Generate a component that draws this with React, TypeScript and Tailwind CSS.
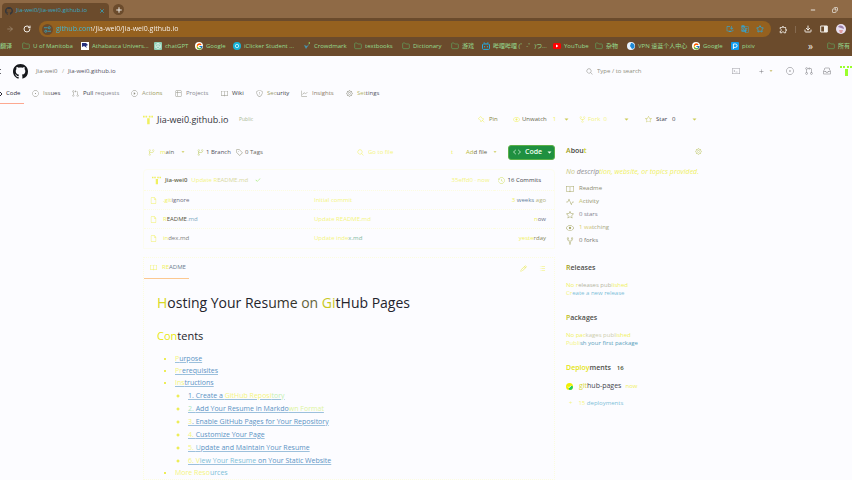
import type { ReactNode } from "react";
import {
  GoBook, GoCheck, GoCode, GoEye, GoFile, GoGear, GoGitBranch, GoGitPullRequest, GoGraph, GoHistory, GoInbox,
  GoIssueOpened, GoListUnordered, GoPencil, GoPin, GoPlay, GoPlus, GoPulse, GoRepoForked, GoSearch,
  GoShield, GoStar, GoTable, GoTag, GoTerminal, GoTriangleDown,
} from "react-icons/go";
import { FcGoogle } from "react-icons/fc";
import { MdGTranslate, MdOutlineInstallDesktop, MdOutlineExtension } from "react-icons/md";
import { ArrowRight, Copy, Download, Folder, Minus, Plus, RotateCw, Star, X } from "lucide-react";

type Part = [text: string, color: string];

const pale = "text-[#f0f060]";
const faint = "text-[#f4f480]";
const ink = "text-[#3c3c48]";
const gray = "text-[#85858d]";
const blue = "text-[#5b93c4]";
const sky = "text-[#7cc0d8]";

function Tint({ parts }: { parts: Part[] }) {
  return (
    <>
      {parts.map(([text, color], i) => (
        <span key={i} className={color}>{text}</span>
      ))}
    </>
  );
}

function GithubMark({ className }: { className: string }) {
  return (
    <svg viewBox="0 0 16 16" className={className} fill="currentColor" aria-hidden="true">
      <path d="M8 0C3.58 0 0 3.58 0 8c0 3.54 2.29 6.53 5.47 7.59.4.07.55-.17.55-.38 0-.19-.01-.82-.01-1.49-2.01.37-2.53-.49-2.69-.94-.09-.23-.48-.94-.82-1.13-.28-.15-.68-.52-.01-.53.63-.01 1.08.58 1.23.82.72 1.21 1.87.87 2.33.66.07-.52.28-.87.51-1.07-1.78-.2-3.64-.89-3.64-3.95 0-.87.31-1.59.82-2.15-.08-.2-.36-1.02.08-2.12 0 0 .67-.21 2.2.82.64-.18 1.32-.27 2-.27s1.36.09 2 .27c1.53-1.04 2.2-.82 2.2-.82.44 1.1.16 1.92.08 2.12.51.56.82 1.27.82 2.15 0 3.07-1.87 3.75-3.65 3.95.29.25.54.73.54 1.48 0 1.07-.01 1.93-.01 2.2 0 .21.15.46.55.38A8.01 8.01 0 0 0 16 8c0-4.42-3.58-8-8-8z" />
    </svg>
  );
}

function PixelAvatar({ className }: { className: string }) {
  return (
    <svg viewBox="0 0 12 12" className={className} fill="currentColor" aria-hidden="true">
      <path d="M0 1h2v2H0zM3 1h2v2H3zM7 1h2v2H7zM10 1h2v2h-2zM5 4h3v3H5zM5 7h3v4H5z" />
    </svg>
  );
}

const folder = <Folder className="size-2 text-[#62a862]" />;
const google = (
  <span className="flex size-2 items-center justify-center rounded-full bg-white">
    <FcGoogle className="size-[7px]" />
  </span>
);

const bookmarks: { label: string; width: string; icon: ReactNode }[] = [
  { label: "U of Manitoba", width: "w-[59px]", icon: folder },
  {
    label: "Athabasca Univers...", width: "w-[73px]",
    icon: <svg viewBox="0 0 8 8" className="size-2"><path fill="#fff" d="M0 0h8v8H0z" /><path fill="#27307c" d="M1 1h4l2 2-2 1 1 2-3-2-2 1z" /></svg>,
  },
  {
    label: "chatGPT", width: "w-[41px]",
    icon: <svg viewBox="0 0 8 8" className="size-2"><rect width="8" height="8" rx="1" fill="#8fceb4" /><path d="M4 1.3 6.3 2.6v2.8L4 6.7 1.7 5.4V2.6zM4 1.3v2.7l2.3 1.4M4 4 1.7 5.4" fill="none" stroke="#fff" strokeWidth=".6" /></svg>,
  },
  { label: "Google", width: "w-[38px]", icon: google },
  {
    label: "iClicker Student ...", width: "w-[70px]",
    icon: <svg viewBox="0 0 8 8" className="size-2"><circle cx="4" cy="4" r="4" fill="#16b4d8" /><circle cx="4" cy="4" r="1.7" fill="none" stroke="#d8f6ff" strokeWidth=".8" /></svg>,
  },
  {
    label: "Crowdmark", width: "w-[51px]",
    icon: <svg viewBox="0 0 8 8" className="size-2"><path d="m1 3 2 4 4-6-3 3z" fill="#4a93a8" /><path d="m5 1 2-1v2z" fill="#8ad05c" /></svg>,
  },
  { label: "textbooks", width: "w-[48px]", icon: folder },
  { label: "Dictionary", width: "w-[49px]", icon: folder },
  { label: "游戏", width: "w-[31px]", icon: folder },
  {
    label: "哔哩哔哩 (゜-゜)つ...", width: "w-[71px]",
    icon: <svg viewBox="0 0 8 8" className="size-2" fill="none" stroke="#27a9dd" strokeWidth="1"><rect x=".5" y="2" width="7" height="5.4" rx="1" /><path d="m2 .3 1 1.5M6 .3 5 1.8M2.6 4v1.4M5.4 4v1.4" /></svg>,
  },
  {
    label: "YouTube", width: "w-[42px]",
    icon: <svg viewBox="0 0 8 8" className="size-2"><rect y="1" width="8" height="6" rx="1.5" fill="#f00" /><path d="M3 2.6v2.8L5.4 4z" fill="#fff" /></svg>,
  },
  { label: "杂物", width: "w-[32px]", icon: folder },
  {
    label: "VPN 速蓝个人中心", width: "w-[65px]",
    icon: <svg viewBox="0 0 8 8" className="size-2"><circle cx="4" cy="4" r="4" fill="#e9f4ff" /><path d="M4 1a3 3 0 0 1 1 6L3 4z" fill="#1c8ad6" /></svg>,
  },
  { label: "Google", width: "w-[39px]", icon: google },
  {
    label: "pixiv", width: "w-[40px]",
    icon: <svg viewBox="0 0 8 8" className="size-2"><rect width="8" height="8" rx="1" fill="#0f9cf0" /><path d="M2.4 7V2h2a1.7 1.7 0 0 1 0 3.4h-2" fill="none" stroke="#fff" strokeWidth=".9" /></svg>,
  },
];

function Browser() {
  return (
    <header className="h-14 overflow-hidden bg-[#6b4b2c]">
      <div className="flex h-[18px] items-end bg-[#8f6a46] pl-0.5">
        <div className="flex h-[15px] w-[107px] items-center rounded-t bg-[#6b4b2c] pr-1 pl-[3px] text-[6px] text-[#35a6c0]">
          <GithubMark className="size-2 text-[#33363c]" />
          <span className="ml-[3px] flex-1 whitespace-nowrap">Jia-wei0/Jia-wei0.github.io</span>
          <button type="button" aria-label="Close tab"><X className="size-[6px]" strokeWidth={3} /></button>
        </div>
        <button type="button" aria-label="New tab" className="mb-[3px] ml-1 flex size-[11px] items-center justify-center rounded-full bg-[#6b4b2c] text-[#f0ece6]">
          <Plus className="size-2" strokeWidth={3} />
        </button>
        <div className="mb-[5px] ml-auto flex gap-4 pr-3.5 text-[#e6e0d8]">
          <button type="button" aria-label="Minimize"><Minus className="size-[6px]" strokeWidth={4} /></button>
          <button type="button" aria-label="Restore"><Copy className="size-[6px] -scale-x-100" strokeWidth={3} /></button>
        </div>
      </div>
      <div className="flex h-[22px] items-center pr-1.5 pl-1.5">
        <button type="button" aria-label="Forward" className="text-[#a9957c]"><ArrowRight className="size-2" /></button>
        <button type="button" aria-label="Reload" className="ml-[9px] text-[#f2ede6]"><RotateCw className="size-2" strokeWidth={3} /></button>
        <div className="ml-2 flex h-4 flex-1 items-center rounded-full bg-[#95611f] pr-[7px] pl-[3px]">
          <span className="flex size-[11px] items-center justify-center rounded-full bg-[#6b4b2c]">
            <svg viewBox="0 0 8 8" className="size-[7px]" fill="none" stroke="#39a0bb"><path d="M0 2h4M4 6h4" /><circle cx="6" cy="2" r="1.2" /><circle cx="2" cy="6" r="1.2" /></svg>
          </span>
          <input
            aria-label="Address"
            defaultValue="github.com/Jia-wei0/Jia-wei0.github.io"
            className="ml-[3px] min-w-0 flex-1 bg-[linear-gradient(90deg,#3cbce0_35px,#ffffff_35px)] bg-clip-text text-[7px] text-transparent outline-none"
          />
          <span className="flex gap-[7px] text-[#3c9fc4]">
            <MdOutlineInstallDesktop className="size-2" />
            <MdGTranslate className="size-2" />
            <Star className="size-2" strokeWidth={3} />
          </span>
        </div>
        <div className="ml-2 flex items-center text-[#f2ede6]">
          <MdOutlineExtension className="size-[9px]" />
          <span className="ml-[7px] h-[7px] w-px bg-[#856a50]" />
          <Download className="ml-2 size-2" strokeWidth={3} />
          <svg viewBox="0 0 8 8" className="ml-2 size-2"><path d="M.7 1h6.6v6H.7zM4.5 1v6" fill="none" stroke="currentColor" /><path d="M4.5 1h2.8v6H4.5z" fill="currentColor" /></svg>
          <svg viewBox="0 0 10 10" className="ml-2 size-[10px]"><circle cx="5" cy="5" r="5" fill="#e8dff0" /><path d="M2 3c2-3 6-1 6 2L5 4z" fill="#9b7fa8" /><path d="M3 6h4l-1 3H4z" fill="#dd9ba0" /></svg>
        </div>
      </div>
      <nav aria-label="Bookmarks" className="flex h-3 items-center overflow-hidden text-[6px] whitespace-nowrap text-[#96dc90]">
        <a href="#" className="w-[22px] shrink-0">翻译</a>
        {bookmarks.map((b, i) => (
          <a key={i} href="#" className={`flex shrink-0 items-center gap-[3px] ${b.width}`}>
            <span className="shrink-0">{b.icon}</span>
            {b.label}
          </a>
        ))}
        <span className="ml-auto text-[10px] leading-3 text-[#f0ece6]">»</span>
        <a href="#" className="ml-[14px] flex w-[25px] shrink-0 items-center gap-[3px]"><span className="shrink-0">{folder}</span>所有</a>
      </nav>
    </header>
  );
}

const tabs: { label: Part[]; width: string; icon: ReactNode }[] = [
  { label: [["Iss", "text-[#8c8c70]"], ["ues", ink]], width: "w-10", icon: <GoIssueOpened /> },
  { label: [["Pull", ink], [" requests", gray]], width: "w-[59px]", icon: <GoGitPullRequest /> },
  { label: [["Act", "text-[#a0a080]"], ["ions", "text-[#9a9a54]"]], width: "w-11", icon: <GoPlay /> },
  { label: [["Projects", gray]], width: "w-[46px]", icon: <GoTable /> },
  { label: [["Wiki", ink]], width: "w-[35px]", icon: <GoBook /> },
  { label: [["Sec", "text-[#9c9c70]"], ["urity", ink]], width: "w-[45px]", icon: <GoShield /> },
  { label: [["Insights", "text-[#8c7c68]"]], width: "w-[45px]", icon: <GoGraph /> },
  { label: [["Set", "text-[#b4b46c]"], ["tings", "text-[#555564]"]], width: "w-10", icon: <GoGear /> },
];

function SiteHeader() {
  return (
    <div className="h-12">
      <div className="flex h-[30px] items-center text-[6px]">
        <span className="h-[5px] w-px border-y border-[#66666e]" />
        <GithubMark className="ml-3 size-[15px] text-[#16181c]" />
        <a href="#" className="ml-2 w-[26px] text-[#77776c]">Jia-wei0</a>
        <span className="w-[6px] text-[#b0b0a0]">/</span>
        <a href="#" className="text-[#50505c]">Jia-wei0.github.io</a>
        <label className="ml-auto flex w-[146px] items-center gap-1 text-[#8a8a84]">
          <GoSearch className="size-[7px]" />
          <input aria-label="Search" placeholder="Type / to search" className="w-[90px] text-[6px] outline-none placeholder:text-[#8f8f80]" />
        </label>
        <div className="flex items-center text-[#77777c]">
          <button type="button" aria-label="Command palette" className="w-[26px]"><GoTerminal className="size-2 text-[#9c9ca4]" /></button>
          <button type="button" aria-label="Create new" className="flex w-7 items-center gap-[3px]"><GoPlus className="size-[7px]" /><GoTriangleDown className="size-[6px] text-[#c4b860]" /></button>
          <a href="#" aria-label="Issues" className="w-[19px]"><GoIssueOpened className="size-2" /></a>
          <a href="#" aria-label="Pull requests" className="w-[18px]"><GoGitPullRequest className="size-2" /></a>
          <a href="#" aria-label="Notifications" className="w-[17px]"><GoInbox className="size-2" /></a>
          <PixelAvatar className="size-3 text-[#9aff2c]" />
        </div>
      </div>
      <nav aria-label="Repository" className="flex h-[18px] text-[6px]">
        <a href="#" className="flex w-6 items-center gap-1 border-b border-[#fda890] pb-[2px] text-[#2c2c38]">
          <svg viewBox="0 0 2 6" className="h-[6px] w-[2px]" fill="none" stroke="currentColor"><path d="m0 1 2 2-2 2" /></svg>
          Code
        </a>
        <span className="w-2" />
        {tabs.map((t, i) => (
          <a key={i} href="#" className={`flex items-center gap-1 pb-[3px] whitespace-nowrap text-[#8e8e80] [&>svg]:size-[7px] ${t.width}`}>
            {t.icon}
            <span><Tint parts={t.label} /></span>
          </a>
        ))}
      </nav>
    </div>
  );
}

const caret = <GoTriangleDown className="size-[6px] text-[#cccc58]" />;

function TitleRow() {
  return (
    <div className="flex h-[31px] items-center text-[6px] whitespace-nowrap">
      <PixelAvatar className={`size-[10px] ${pale}`} />
      <h1 className="ml-1 w-[82px] text-[9px] text-[#34343c]">Jia-wei0.github.io</h1>
      <span className="text-[5px] text-[#a8b890]">Public</span>
      <div className="ml-auto flex items-center text-[#3c3c48] [&_svg]:size-[7px]">
        <button type="button" className="flex w-[35px] items-center gap-1"><GoPin className={pale} /><span className="text-[#84843c]">Pin</span></button>
        <button type="button" className="flex w-[66px] items-center gap-[2px]"><GoEye className={pale} /><Tint parts={[["Unwatch", "text-[#66664c]"]]} /><span className={`ml-1 ${pale}`}>1</span><span className="ml-[5px]">{caret}</span></button>
        <button type="button" className="flex w-[66px] items-center gap-[2px]"><GoRepoForked className={pale} /><span className={`w-[33px] text-left ${faint}`}>Fork&nbsp; 0</span>{caret}</button>
        <button type="button" className="flex w-[57px] items-center gap-1"><GoStar className="text-[#c4c45c]" /><span>Star&nbsp;&nbsp; 0</span><span className="ml-3">{caret}</span></button>
      </div>
    </div>
  );
}

const files: { name: Part[]; message: Part[]; date: Part[] }[] = [
  { name: [[".git", pale], ["ignore", "text-[#6c6c80]"]], message: [["Initial commit", faint]], date: [["3 ", pale], ["weeks", "text-[#66809c]"], [" ago", "text-[#b4b480]"]] },
  { name: [["R", pale], ["EADME", "text-[#55553c]"], [".md", "text-[#7ca8c0]"]], message: [["Update README.md", faint]], date: [["n", pale], ["ow", "text-[#6c7088]"]] },
  { name: [["in", pale], ["dex.md", "text-[#80807c]"]], message: [["Update inde", faint], ["x.md", "text-[#80b8a0]"]], date: [["yeste", pale], ["rday", "text-[#88885c]"]] },
];

function Files() {
  return (
    <div className="flex-1 text-[6px] whitespace-nowrap">
      <div className="flex h-[34px] items-center">
        <button type="button" className="ml-[5px] flex w-[49px] items-center"><GoGitBranch className="size-[7px] text-[#d4dc60]" /><span className="ml-[5px] w-5 text-left text-[#66665c]"><span className={pale}>m</span>ain</span>{caret}</button>
        <a href="#" className="flex w-[39px] items-center gap-[2px] text-[#50505c]"><GoGitBranch className="size-[7px] text-[#b4c458]" />1 Branch</a>
        <a href="#" className="flex items-center gap-[2px] text-[#66665c]"><GoTag className="size-[7px] text-[#8c8c70]" />0 Tags</a>
        <label className={`ml-auto flex w-[109px] items-center gap-1 ${pale}`}>
          <GoSearch className="size-[7px]" />
          <input aria-label="Go to file" placeholder="Go to file" className="w-[79px] text-[6px] outline-none placeholder:text-[#f4f480]" />
          t
        </label>
        <button type="button" className="flex w-[42px] items-center text-[#66664c]"><span className="w-[26px] text-left"><span className="text-[#b8b840]">Ad</span>d file</span>{caret}</button>
        <button type="button" className="flex h-[15px] w-[47px] items-center rounded-[3px] border border-[#5cb048] bg-[#1f9040] pl-1 text-[7px] font-semibold text-[#f0fff0]"><GoCode className="mr-1 size-2" />Code<GoTriangleDown className="ml-1 size-[7px]" /></button>
      </div>
      <section className="rounded-t border border-[#fcfcf0]">
        <div className="flex h-5 items-center pr-[13px] pl-2">
          <PixelAvatar className={`size-[9px] ${pale}`} />
          <a href="#" className="ml-1 font-semibold text-[#66664c]">Jia-wei0</a>
          <a href="#" className={`ml-1 ${faint}`}>Update R<span className="text-[#d8d8a0]">EADME.md</span></a>
          <GoCheck className="ml-[7px] size-[6px] text-[#84e840]" />
          <span className={`ml-auto ${faint}`}>35effd0 · now</span>
          <a href="#" className="ml-2 flex items-center gap-[3px] text-[#3c3c48]"><GoHistory className="size-[7px] text-[#d0e060]" />16 Commits</a>
        </div>
        <table className="w-full table-fixed">
          <tbody>
            {files.map((f, i) => (
              <tr key={i} className="h-[19px] border-t border-dotted border-[#fcfce0]">
                <td className="w-[170px] p-0 pl-[6px]"><a href="#" className="flex items-center gap-[6px]"><GoFile className={`size-[7px] ${pale}`} /><span><Tint parts={f.name} /></span></a></td>
                <td className="p-0"><Tint parts={f.message} /></td>
                <td className="w-[60px] p-0 pr-2 text-right"><Tint parts={f.date} /></td>
              </tr>
            ))}
          </tbody>
        </table>
      </section>
      <Readme />
    </div>
  );
}

const top: Part[][] = [
  [["P", faint], ["urpose", blue]],
  [["Pr", faint], ["erequisites", blue]],
  [["Ins", faint], ["tructions", blue]],
];
const steps: Part[][] = [
  [["1. Create a ", blue], ["GitHub Reposi", faint], ["tory", "text-[#c4f0b0]"]],
  [["2. ", "text-[#a8e4c0]"], ["Add Your Resume in Markdo", blue], ["wn Format", "text-[#dcf4a0]"]],
  [["3", faint], [". Enable GitHub Pages for Your Repository", blue]],
  [["4. ", faint], ["Customize Your Page", blue]],
  [["5. ", faint], ["U", sky], ["pdate and Maintain Your Resume", blue]],
  [["6. V", faint], ["iew Your Resume ", sky], ["on Your Static Website", blue]],
];

function Readme() {
  return (
    <article className="mt-2 border border-dotted border-[#fcfce0]">
      <div className="flex h-[21px] items-center pr-2">
        <a href="#" className="flex h-full w-[45px] items-center gap-[5px] border-b border-[#fcc890] pl-[6px]"><GoBook className={`size-[7px] ${pale}`} /><span><Tint parts={[["RE", pale], ["ADME", "text-[#6c7c90]"]]} /></span></a>
        <button type="button" aria-label="Edit" className="ml-auto"><GoPencil className="size-[7px] text-[#e8e84c]" /></button>
        <button type="button" aria-label="Outline" className="ml-3"><GoListUnordered className={`size-[7px] ${pale}`} /></button>
      </div>
      <div className="pl-[13px]">
        <h2 className="mt-[14px] text-[14px] leading-5 text-[#24242c]"><Tint parts={[["H", "text-[#d8d824]"], ["osting Your Res", "text-[#24242c]"], ["ume ", "text-[#34342c]"], ["on ", "text-[#64643c]"], ["Gi", "text-[#c8c824]"], ["tHub Pages", "text-[#24242c]"]]} /></h2>
        <h3 className="mt-[15px] text-[11px] leading-4"><Tint parts={[["Con", "text-[#e8e810]"], ["tents", "text-[#24242c]"]]} /></h3>
        <ul className="mt-[9px] list-disc pl-[18px] text-[7px] leading-3 marker:text-[#e8e820]">
          {top.map((parts, i) => (
            <li key={i}>
              <a href="#" className="underline decoration-[#9cc0dc]"><Tint parts={parts} /></a>
              {i === 2 && (
                <ul className="list-[circle] pl-[13px] leading-[13px]">
                  {steps.map((s, j) => (
                    <li key={j}><a href="#" className="underline decoration-[#9cc0dc]"><Tint parts={s} /></a></li>
                  ))}
                </ul>
              )}
            </li>
          ))}
          <li><a href="#"><Tint parts={[["More Reso", faint], ["urces", sky]]} /></a></li>
        </ul>
      </div>
    </article>
  );
}

const facts: { icon: ReactNode; parts: Part[] }[] = [
  { icon: <GoBook />, parts: [["Readme", "text-[#8c8c70]"]] },
  { icon: <GoPulse />, parts: [["A", "text-[#c8c870]"], ["ctivity", "text-[#909068]"]] },
  { icon: <GoStar />, parts: [["0 stars", "text-[#80808c]"]] },
  { icon: <GoEye />, parts: [["1 wa", "text-[#d8cc70]"], ["tching", "text-[#a8a880]"]] },
  { icon: <GoRepoForked />, parts: [["0 forks", "text-[#74746c]"]] },
];

function Side() {
  return (
    <aside className="w-[136px] text-[6px] whitespace-nowrap">
      <div className="flex h-8 items-center justify-between">
        <h2 className="text-[7px] font-semibold"><Tint parts={[["A", "text-[#9c9c20]"], ["bou", "text-[#44443c]"], ["t", "text-[#d4d430]"]]} /></h2>
        <button type="button" aria-label="Edit details"><GoGear className="size-[7px] text-[#c0c86c]" /></button>
      </div>
      <p className="text-[7px] leading-[10px] italic"><Tint parts={[["No ", "text-[#c8c880]"], ["descrip", "text-[#8c8c90]"], ["tion, website, or topics provided.", pale]]} /></p>
      <ul className="mt-[5px] leading-[13px]">
        {facts.map((f, i) => (
          <li key={i}><a href="#" className="flex h-[13px] items-center gap-[5px] text-[#a8a868] [&>svg]:size-2">{f.icon}<span><Tint parts={f.parts} /></span></a></li>
        ))}
      </ul>
      <section className="mt-4">
        <h2 className="text-[7px] leading-[10px] font-semibold"><Tint parts={[["R", "text-[#a0a020]"], ["eleases", "text-[#50504c]"]]} /></h2>
        <p className="mt-2 leading-2"><Tint parts={[["No r", pale], ["eleases pub", "text-[#b4b4a0]"], ["lished", pale]]} /></p>
        <a href="#" className="block leading-[9px]"><Tint parts={[["Cr", faint], ["eate a new release", sky]]} /></a>
      </section>
      <section className="mt-[15px]">
        <h2 className="text-[7px] leading-[10px] font-semibold"><Tint parts={[["P", "text-[#c0c020]"], ["ackages", "text-[#50504c]"]]} /></h2>
        <p className="mt-2 leading-2"><Tint parts={[["No pac", pale], ["kages publ", "text-[#ccccac]"], ["ished", pale]]} /></p>
        <a href="#" className="block leading-[9px]"><Tint parts={[["Publi", faint], ["sh your first package", "text-[#58a0bc]"]]} /></a>
      </section>
      <section className="mt-[15px]">
        <h2 className="flex text-[7px] leading-[10px] font-semibold"><Tint parts={[["Deploy", "text-[#e4e410]"], ["ments", "text-[#50504c]"]]} /><span className="ml-[6px] text-[6px] text-[#3c4c30]">16</span></h2>
        <a href="#" className="mt-2 flex h-[10px] items-center text-[7px]">
          <svg viewBox="0 0 8 8" className="size-[7px]"><circle cx="4" cy="4" r="4" fill="#f0f000" /><path d="M4 8a4 4 0 0 0 4-4L6 3 3 6z" fill="#1fd060" /><path d="m2.4 4.2 1.2 1.2 2.2-2.4" fill="none" stroke="#fff" /></svg>
          <span className="ml-[6px]"><Tint parts={[["git", "text-[#d8d830]"], ["hub-pages", "text-[#44444c]"]]} /></span>
          <span className={`ml-1 text-[6px] ${pale}`}>now</span>
        </a>
        <a href="#" className="mt-[7px] ml-[3px] flex h-[10px] items-center gap-[6px]"><span className={faint}>+</span><span><Tint parts={[["15 ", faint], ["deployments", sky]]} /></span></a>
      </section>
    </aside>
  );
}

export default function App() {
  return (
    <div className="h-screen overflow-hidden bg-[#fcfcff] font-['Open_Sans','Noto_Sans_CJK_SC',sans-serif]">
      <Browser />
      <SiteHeader />
      <main className="pr-[150px] pl-[143px]">
        <TitleRow />
        <div className="flex gap-[11px]">
          <Files />
          <Side />
        </div>
      </main>
    </div>
  );
}
